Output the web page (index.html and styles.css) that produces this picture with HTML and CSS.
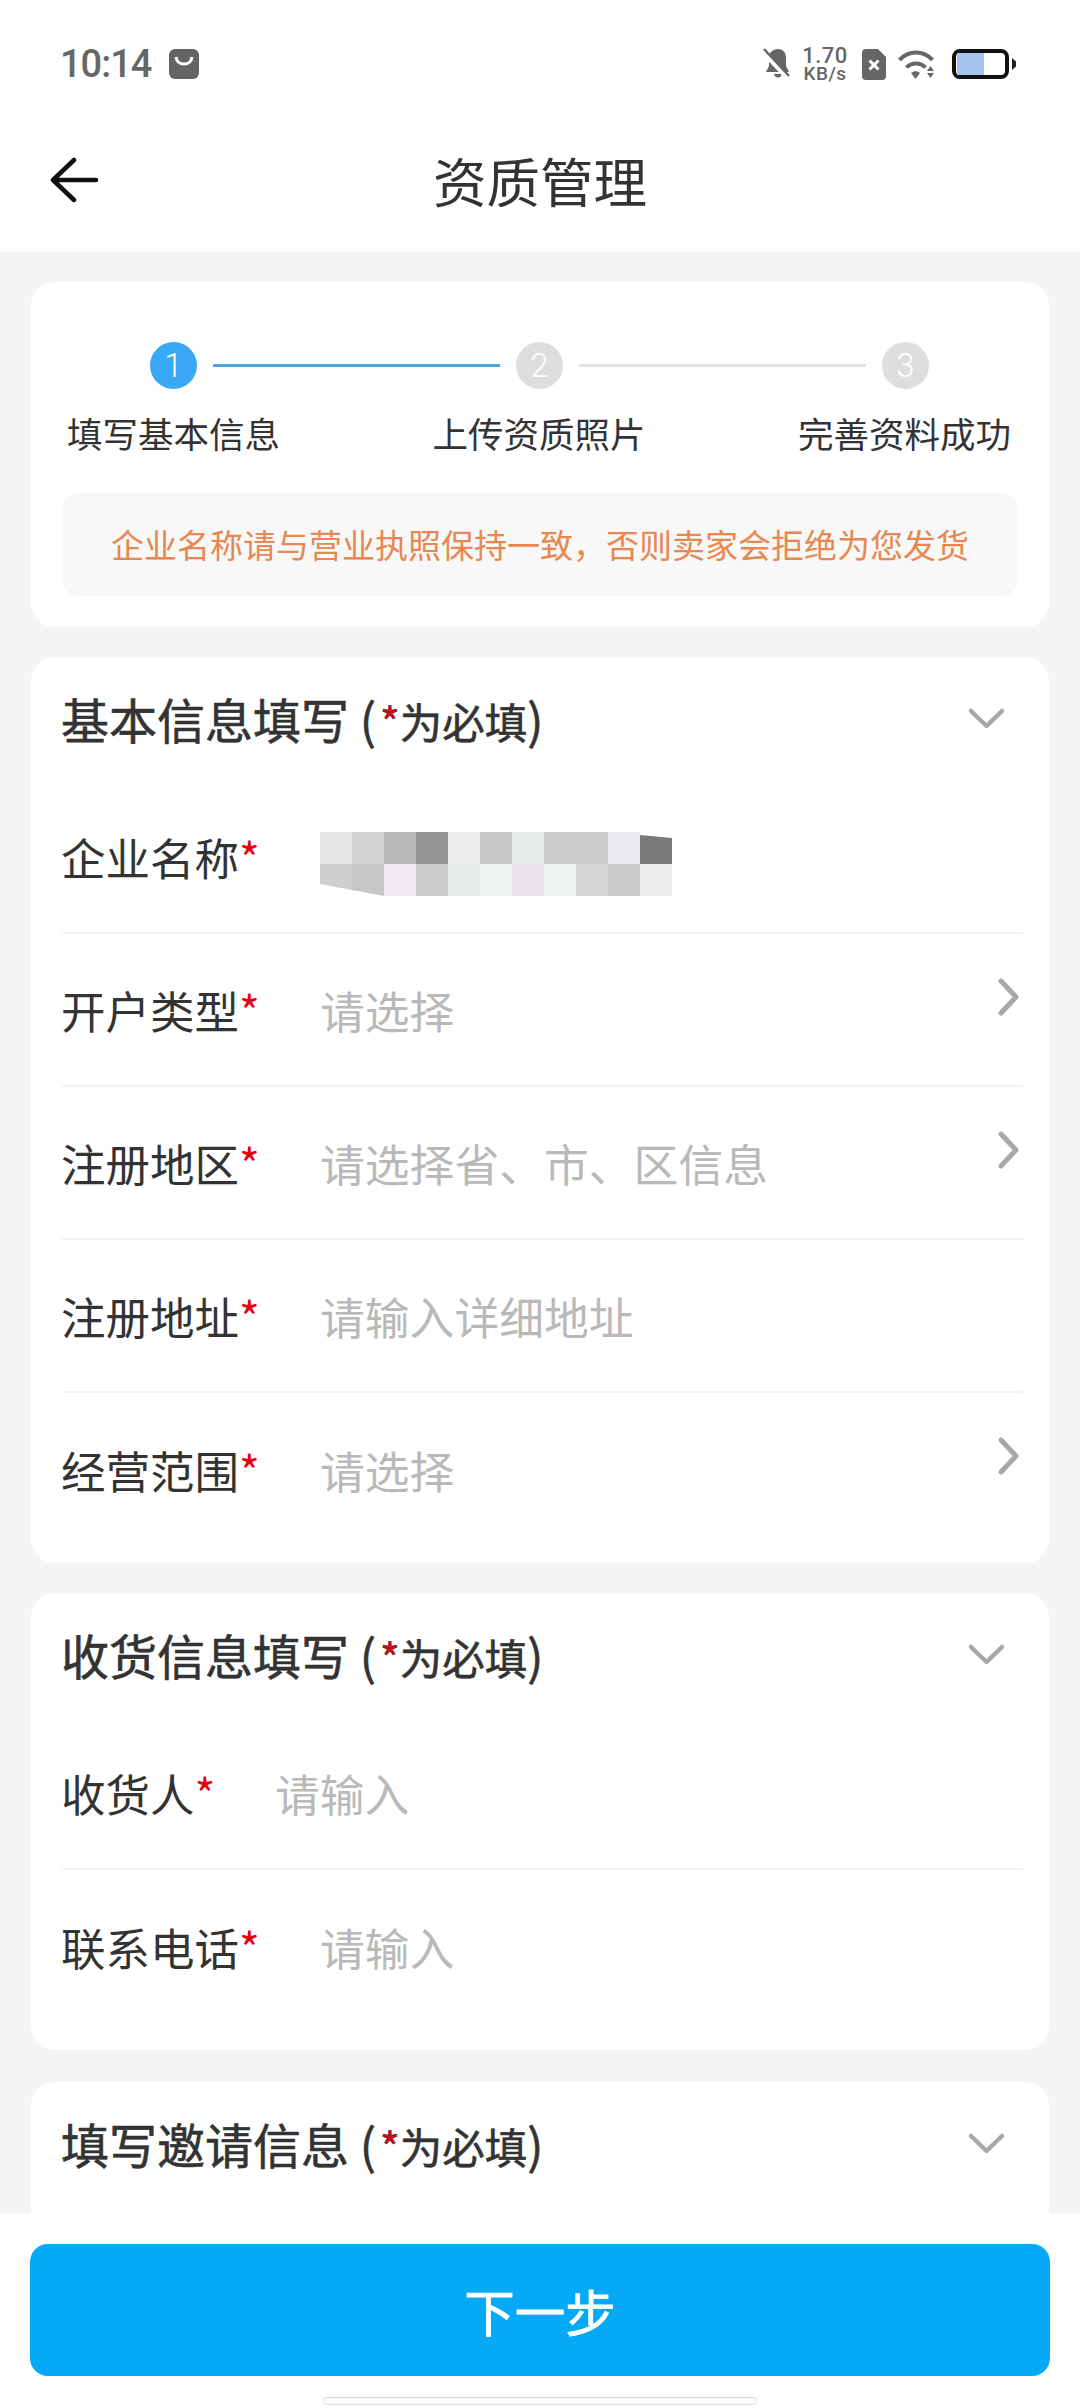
FILE: index.html
```html
<!DOCTYPE html>
<html lang="zh-CN">
<head>
<meta charset="utf-8">
<title>资质管理</title>
<link rel="stylesheet" href="styles.css">
</head>
<body>
<div class="app">
  <header class="top">
    <div class="status">
      <div class="status-left">
        <span class="time">10:14</span>
        <svg width="30" height="30" viewBox="0 0 30 30"><rect width="30" height="30" rx="6" fill="#646464"/><path d="M7 8c1 6 4 7 8 7s7-1 8-7" fill="none" stroke="#fff" stroke-width="3"/></svg>
      </div>
      <div class="status-right">
        <svg class="ic-bell" width="27" height="32" viewBox="0 0 27 32"><path d="M15 1c5.500 0 8 4 8 9v8l3 6H3l3-6v-8c0-5.500 3.500-9 9-9zM11 26h8c-.5 4.500-7.500 4.500-8 0z" fill="#666"/><path d="M0 4l24 25" stroke="#fff" stroke-width="5"/><path d="M1 1l25 27" stroke="#666" stroke-width="2.500"/></svg>
        <span class="speed"><b>1.70</b><i>KB/s</i></span>
        <svg class="ic-sim" width="24" height="31" viewBox="0 0 24 31"><path d="M4 0h12l8 8v19a4 4 0 0 1-4 4H4a4 4 0 0 1-4-4V4a4 4 0 0 1 4-4z" fill="#666"/><path d="M7.500 11.500l9 9m0-9l-9 9" stroke="#fff" stroke-width="3"/></svg>
        <svg class="ic-wifi" width="37" height="29" viewBox="0 0 37 29"><path d="M1.500 10c9-10 24-10 33 0M8.500 17.500c5-5.500 14-5.500 19 0" fill="none" stroke="#666" stroke-width="4"/><path d="M13 23c3-2.500 6-2.500 9 0l-4.500 6zM29 21h7l-3.500-5zM29 23h7l-3.500 5z" fill="#666"/></svg>
        <div class="battery"><div class="battery-fill"></div></div>
        <div class="battery-tip"></div>
      </div>
    </div>
    <div class="nav">
      <svg class="back" width="52" height="46" viewBox="0 0 52 46"><path d="M25 3L4 23l21 20M4 23h43" fill="none" stroke="#111" stroke-width="4.500" stroke-linecap="round" stroke-linejoin="round"/></svg>
      <h1 class="nav-title">资质管理</h1>
    </div>
  </header>

  <main class="content">
    <section class="card steps-card">
      <div class="step-track">
        <span class="dot dot-on">1</span><span class="line line-on"></span>
        <span class="dot">2</span><span class="line"></span>
        <span class="dot">3</span>
      </div>
      <div class="step-labels">
        <span class="step-label">填写基本信息</span>
        <span class="step-label">上传资质照片</span>
        <span class="step-label">完善资料成功</span>
      </div>
      <p class="notice">企业名称请与营业执照保持一致，否则卖家会拒绝为您发货</p>
    </section>

    <section class="card form-card card-basic">
      <div class="sec-head">
        <h2 class="sec-title">基本信息填写 (<span class="sec-note"><em>*</em>为必填</span>)</h2>
        <svg class="chev-down" width="39" height="23" viewBox="0 0 39 23"><path d="M4 4l15.500 15L35 4" fill="none" stroke="#a8a8a8" stroke-width="4.500" stroke-linecap="round" stroke-linejoin="round"/></svg>
      </div>
      <div class="row">
        <span class="label">企业名称<em>*</em></span>
        <svg class="mosaic" width="352" height="64" viewBox="0 0 352 64">
          <rect x="0" width="32" height="32" fill="#e6e6e6"/><rect x="32" width="32" height="32" fill="#d3d3d3"/><rect x="64" width="32" height="32" fill="#b9b9b9"/><rect x="96" width="32" height="32" fill="#949594"/><rect x="128" width="32" height="32" fill="#efedef"/><rect x="160" width="32" height="32" fill="#c8c8ca"/><rect x="192" width="32" height="32" fill="#e7ebe8"/><rect x="224" width="32" height="32" fill="#cbcacc"/><rect x="256" width="32" height="32" fill="#cbcacc"/><rect x="288" width="32" height="32" fill="#ebe9ed"/><path d="M320 3l32 3v26h-32z" fill="#7a7a7a"/>
          <path d="M0 32h32v26L0 52z" fill="#cfcfcf"/><path d="M32 32h32v32l-32-6z" fill="#c6c6c6"/><rect x="64" y="32" width="32" height="32" fill="#efeaef"/><rect x="96" y="32" width="32" height="32" fill="#cbcccb"/><rect x="128" y="32" width="32" height="32" fill="#e6eae7"/><rect x="160" y="32" width="32" height="32" fill="#eff3f0"/><rect x="192" y="32" width="32" height="32" fill="#e8e3e9"/><rect x="224" y="32" width="32" height="32" fill="#eff3f0"/><rect x="256" y="32" width="32" height="32" fill="#d5d5d6"/><rect x="288" y="32" width="32" height="32" fill="#c8c9c8"/><rect x="320" y="32" width="32" height="32" fill="#efecef"/>
        </svg>
      </div>
      <div class="row">
        <span class="label">开户类型<em>*</em></span><span class="ph">请选择</span>
        <svg class="chev-right" width="23" height="38" viewBox="0 0 23 38"><path d="M4 3l15 16L4 35" fill="none" stroke="#a8a8a8" stroke-width="5" stroke-linecap="round" stroke-linejoin="round"/></svg>
      </div>
      <div class="row">
        <span class="label">注册地区<em>*</em></span><span class="ph">请选择省、市、区信息</span>
        <svg class="chev-right" width="23" height="38" viewBox="0 0 23 38"><path d="M4 3l15 16L4 35" fill="none" stroke="#a8a8a8" stroke-width="5" stroke-linecap="round" stroke-linejoin="round"/></svg>
      </div>
      <div class="row">
        <span class="label">注册地址<em>*</em></span><span class="ph">请输入详细地址</span>
      </div>
      <div class="row row-end">
        <span class="label">经营范围<em>*</em></span><span class="ph">请选择</span>
        <svg class="chev-right" width="23" height="38" viewBox="0 0 23 38"><path d="M4 3l15 16L4 35" fill="none" stroke="#a8a8a8" stroke-width="5" stroke-linecap="round" stroke-linejoin="round"/></svg>
      </div>
    </section>

    <section class="card form-card card-receive">
      <div class="sec-head">
        <h2 class="sec-title">收货信息填写 (<span class="sec-note"><em>*</em>为必填</span>)</h2>
        <svg class="chev-down" width="39" height="23" viewBox="0 0 39 23"><path d="M4 4l15.500 15L35 4" fill="none" stroke="#a8a8a8" stroke-width="4.500" stroke-linecap="round" stroke-linejoin="round"/></svg>
      </div>
      <div class="row">
        <span class="label label-short">收货人<em>*</em></span><span class="ph">请输入</span>
      </div>
      <div class="row row-end">
        <span class="label">联系电话<em>*</em></span><span class="ph">请输入</span>
      </div>
    </section>

    <section class="card form-card card-invite">
      <div class="sec-head">
        <h2 class="sec-title">填写邀请信息 (<span class="sec-note"><em>*</em>为必填</span>)</h2>
        <svg class="chev-down" width="39" height="23" viewBox="0 0 39 23"><path d="M4 4l15.500 15L35 4" fill="none" stroke="#a8a8a8" stroke-width="4.500" stroke-linecap="round" stroke-linejoin="round"/></svg>
      </div>
    </section>
  </main>

  <footer class="bottom">
    <button class="next" type="button">下一步</button>
    <div class="home"></div>
  </footer>
</div>
</body>
</html>
```
FILE: styles.css
```css
* { box-sizing: border-box; }
html, body { margin: 0; padding: 0; }
body { font-family: "Noto Sans CJK SC", "Noto Sans", sans-serif; color: #333; }
em { font-style: normal; color: #e60012; }

.app { position: relative; width: 1080px; height: 2408px; background: #f5f5f5; overflow: hidden; }

.top { height: 252px; background: #fff; display: flex; flex-direction: column; }
.status { height: 128px; padding: 47px 64px 0 60px; display: flex; justify-content: space-between; align-items: flex-start; }
.status-left { display: flex; align-items: center; gap: 18px; height: 34px; }
.time { font-family: "Roboto", sans-serif; font-weight: 500; font-size: 38px; line-height: 34px; letter-spacing: -1px; color: #666; }
.status-right { display: flex; align-items: center; height: 34px; }
.speed { display: flex; flex-direction: column; align-items: center; font-family: "Roboto", sans-serif; color: #666; width: 44px; margin: 0 15px 0 13px; white-space: nowrap; }
.speed b { font-weight: 500; font-size: 22px; line-height: 18px; letter-spacing: .5px; }
.speed i { font-style: normal; font-weight: 500; font-size: 19px; line-height: 17px; letter-spacing: .5px; }
.ic-wifi { margin: 0 17px 0 12px; }
.battery { width: 57px; height: 30px; border: 4px solid #111; border-radius: 8px; padding: 0 1px; }
.battery-fill { width: 27px; height: 100%; background: #a6c5ec; }
.battery-tip { width: 4px; height: 12px; background: #222; margin-left: 3px; clip-path: polygon(0 0, 100% 30%, 100% 70%, 0 100%); }

.nav { position: relative; flex: 1; display: flex; align-items: center; justify-content: center; padding-bottom: 21px; }
.back { position: absolute; left: 49px; top: 29px; }
.nav-title { margin: 0; font-size: 53.500px; line-height: 70px; font-weight: 400; color: #333; }

.content { padding: 30px 31px 0; display: flex; flex-direction: column; }
.card { background: #fff; border-radius: 24px; }

.steps-card { height: 345px; padding: 60px 32px 0; margin-bottom: 30px; }
.step-track { height: 47px; margin-left: 87px; display: flex; align-items: center; gap: 16px; }
.dot { flex: none; width: 47px; height: 47px; border-radius: 50%; background: #dedede; color: #fff; font-family: "Roboto", sans-serif; font-size: 33px; line-height: 47px; text-align: center; font-weight: 300; }
.dot-on { background: #39a9f5; }
.line { flex: none; width: 287px; height: 3px; background: #e3e3e3; }
.line-on { background: #4ea4dc; }
.step-labels { display: flex; justify-content: space-between; margin-top: 19px; padding: 0 6px 0 4px; }
.step-label { font-size: 35.5px; line-height: 50px; color: #333; white-space: nowrap; }

.notice { margin: 35px 0 0; height: 103px; background: #f8f8f8; border-radius: 14px; font-size: 33px; line-height: 103px; padding-left: 48px; color: #e8874f; white-space: nowrap; }

.form-card { padding: 0 26px 0 31px; }
.card-basic { padding-bottom: 17px; margin-bottom: 30px; }
.card-receive { padding-bottom: 27px; margin-bottom: 32px; }
.card-invite { height: 220px; }
.sec-head { display: flex; align-items: center; justify-content: space-between; height: 124px; padding-right: 17px; }
.sec-title { margin: 0 0 0 -1px; font-size: 48px; line-height: 66px; font-weight: 400; -webkit-text-stroke: .6px #333; color: #333; white-space: nowrap; }
.sec-note { margin-left: 4px; font-size: 42.500px; }
.chev-down { margin-top: -2px; }

.row { position: relative; height: 153px; display: flex; align-items: center; border-bottom: 2px solid #f3f3f3; }
.row-end { border-bottom: 0; }
.label { width: 258px; flex: none; margin-left: -1px; font-size: 44.500px; line-height: 60px; color: #333; white-space: nowrap; }
.label-short { width: 213px; }
.ph { margin-left: 1px; font-size: 44.800px; line-height: 60px; color: #b9b9b9; white-space: nowrap; }
.mosaic { flex: none; margin-left: 1px; margin-top: 14px; }
.chev-right { position: absolute; right: 3px; top: 44px; }

.bottom { position: absolute; left: 0; right: 0; bottom: 0; height: 195px; background: #fff; padding: 31px 30px 0; }
.next { display: block; width: 100%; height: 132px; border: 0; border-radius: 18px; background: #05a9f5; color: #fff; font-family: inherit; font-size: 50.500px; font-weight: 400; -webkit-text-stroke: .8px #fff; }
.home { width: 434px; height: 8px; margin: 21px auto 0; border: 1px solid #ddd; border-radius: 4px; background: #fafafa; }
```
